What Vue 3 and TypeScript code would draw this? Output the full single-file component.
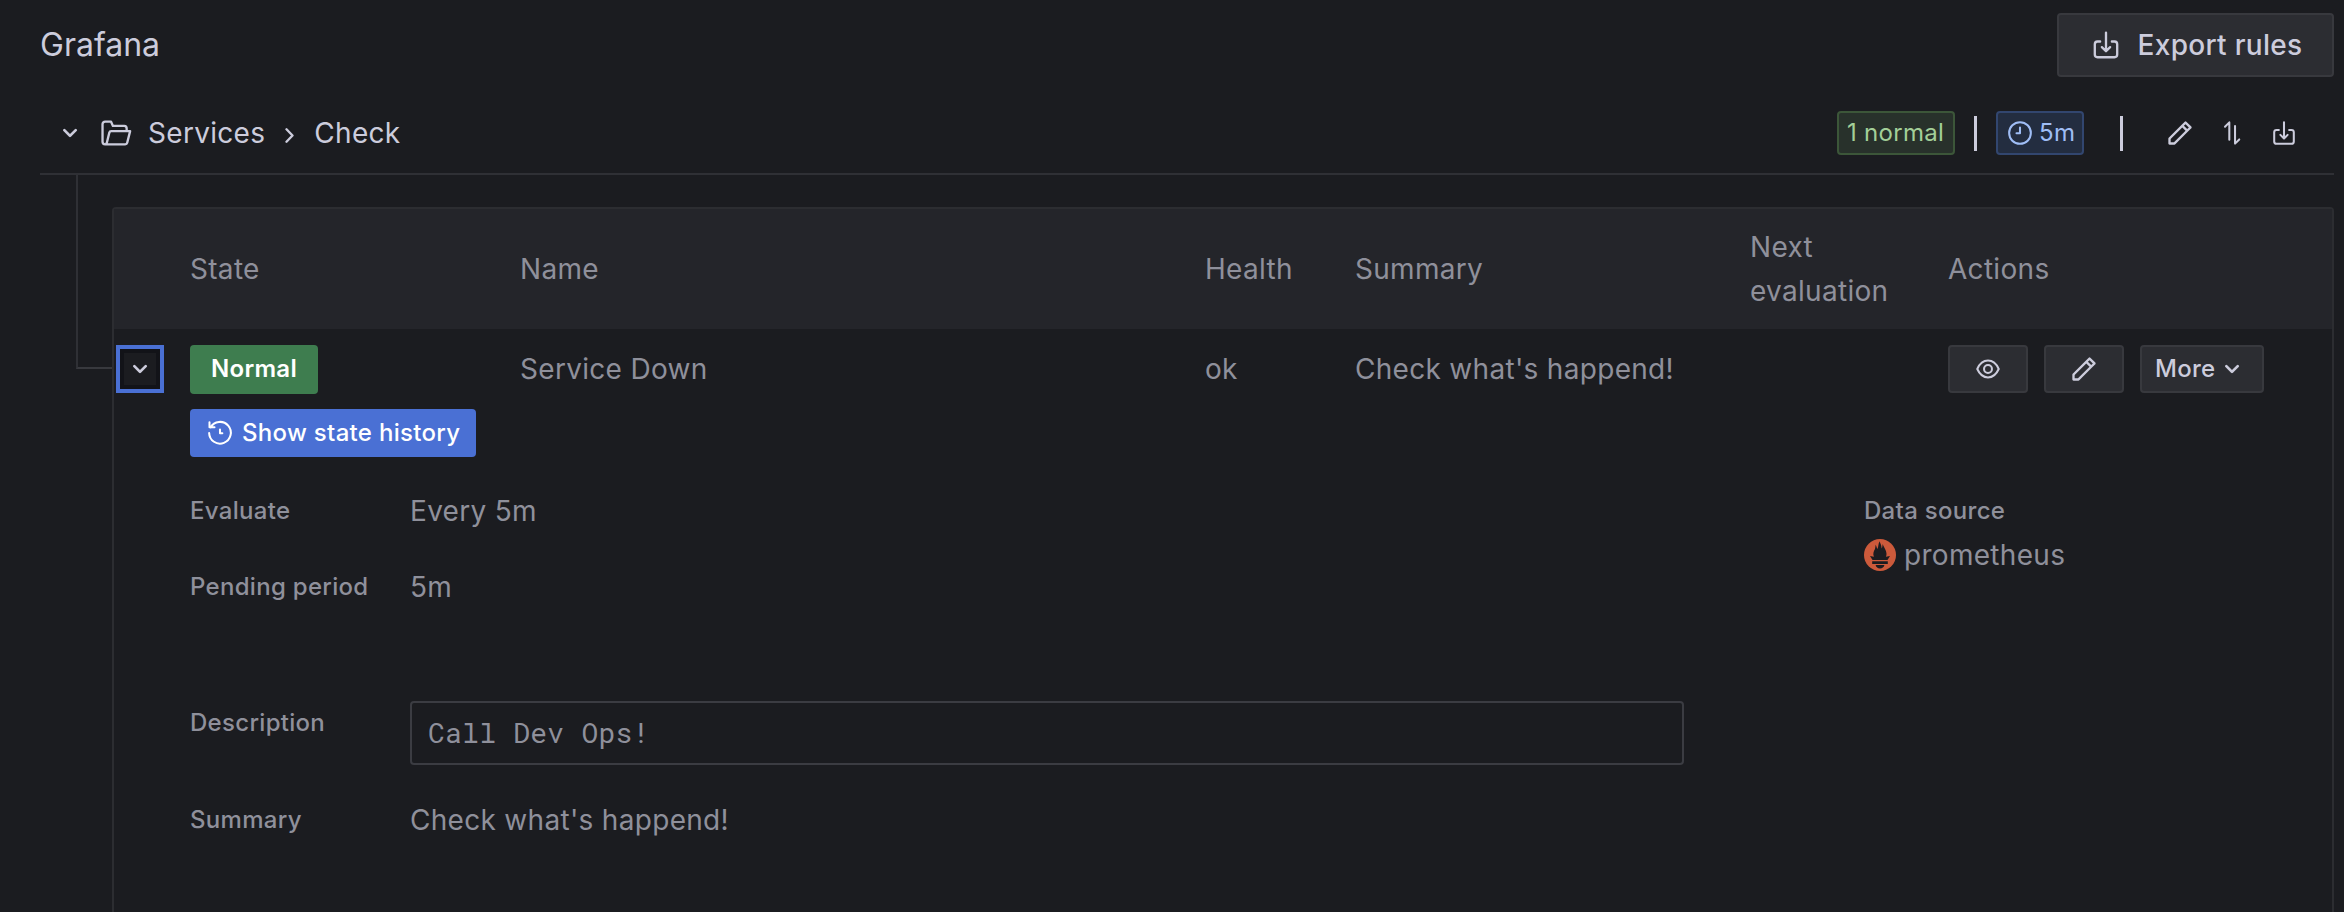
<script setup lang="ts">
interface Detail { label: string; value: string }
const headers: string[] = ['', 'State', 'Name', 'Health', 'Summary', 'Next evaluation', 'Actions']
const timing: Detail[] = [
  { label: 'Evaluate', value: 'Every 5m' },
  { label: 'Pending period', value: '5m' },
]
const chevron = 'M17 9.17a1 1 0 0 0-1.41 0L12 12.71 8.46 9.17a1 1 0 0 0-1.41 0 1 1 0 0 0 0 1.42l4.24 4.24a1 1 0 0 0 1.42 0L17 10.59a1 1 0 0 0 0-1.42Z'
const pen = 'M22 7.24a1 1 0 0 0-.29-.71l-4.24-4.24a1 1 0 0 0-.71-.29 1 1 0 0 0-.71.29l-2.83 2.83L2.29 16.05a1 1 0 0 0-.29.71V21a1 1 0 0 0 1 1h4.24a1 1 0 0 0 .76-.29l10.87-10.93L21.71 8a1.19 1.19 0 0 0 .22-.33 1 1 0 0 0 0-.24.7.7 0 0 0 0-.14ZM6.83 20H4v-2.83l9.93-9.93 2.83 2.83ZM18.17 8.66l-2.83-2.83 1.42-1.41 2.82 2.82Z'
const importIcon = 'M12 2.700V16.500M8.900 13.600 12 16.700 15.100 13.600M7.600 9.400H5.600A2 2 0 0 0 3.600 11.400V19.200A2 2 0 0 0 5.600 21.200H18.400A2 2 0 0 0 20.400 19.200V11.400A2 2 0 0 0 18.400 9.400H16.400'
</script>

<template>
  <main class="page">
    <header class="source">
      <h1>Grafana</h1>
      <button class="btn export">
        <svg class="i32 line" viewBox="0 0 24 24" fill="none"><path :d="importIcon" /></svg>
        <span>Export rules</span>
      </button>
    </header>

    <section class="group">
      <svg class="i32 toggle" viewBox="0 0 24 24"><path :d="chevron" /></svg>
      <svg class="i32 folder line" viewBox="0 0 24 24" fill="none">
        <path d="M3.800 20.500A1.900 1.900 0 0 1 1.900 18.600V5.400A1.900 1.900 0 0 1 3.800 3.500H8.300L9.700 6.700H18.200A1.900 1.900 0 0 1 20 8.600V10.200M3.800 20.500H18.900A1.600 1.600 0 0 0 20.400 19.300L22.600 10.600H8.400A1.500 1.500 0 0 0 7 11.700L5.100 19.500A1.500 1.500 0 0 1 3.800 20.500" />
      </svg>
      <span class="folder-name">Services</span>
      <svg class="crumb" viewBox="0 0 8 14" fill="none"><path d="M1.200 1.200 6.800 7 1.200 12.800" stroke="currentColor" stroke-width="2.200" stroke-linecap="round" stroke-linejoin="round" /></svg>
      <span class="group-name">Check</span>
      <div class="stats">
        <span class="badge ok">1 normal</span>
        <i class="bar first"></i>
        <span class="badge time">
          <svg class="i28 line" viewBox="0 0 24 24" fill="none"><circle cx="12" cy="12" r="9.300" /><path d="M12 7.200V12.200H9" /></svg>
          <span>5m</span>
        </span>
        <i class="bar second"></i>
        <div class="tools">
          <svg class="i28" viewBox="0 0 24 24"><path :d="pen" /></svg>
          <svg class="i28 line" viewBox="0 0 24 24" fill="none"><path d="M9.700 17.700V2.900L6 6.600M14.600 6V21.100L18.200 17.500" /></svg>
          <svg class="i28 line" viewBox="0 0 24 24" fill="none"><path :d="importIcon" /></svg>
        </div>
      </div>
    </section>

    <section class="tree">
      <div class="guide"></div>
      <div class="table">
        <div class="row head">
          <div v-for="h in headers" :key="h">{{ h }}</div>
        </div>
        <div class="row body">
          <div class="expander"><svg class="i32" viewBox="0 0 24 24"><path :d="chevron" /></svg></div>
          <div><span class="state">Normal</span></div>
          <div>Service Down</div>
          <div>ok</div>
          <div>Check what's happend!</div>
          <div></div>
          <div class="actions">
            <button class="btn small">
              <svg class="i28 line" viewBox="0 0 24 24" fill="none"><path d="M2.800 12C4.900 7.300 8 4.800 12 4.800S19.100 7.300 21.200 12C19.100 16.700 16 19.200 12 19.200S4.900 16.700 2.800 12Z" /><circle cx="12" cy="12" r="3.400" /></svg>
            </button>
            <button class="btn small"><svg class="i28" viewBox="0 0 24 24"><path :d="pen" /></svg></button>
            <button class="btn more"><span>More</span><svg class="i32" viewBox="0 0 24 24"><path :d="chevron" /></svg></button>
          </div>
        </div>

        <div class="details">
          <button class="history">
            <svg class="i28 line" viewBox="0 0 24 24" fill="none"><path d="M3 2.700V7H7.300M3.900 7.200A9.300 9.300 0 1 1 2.700 12" /><path d="M12 9V12.200H14" /></svg>
            <span>Show state history</span>
          </button>
          <div class="split">
            <dl class="left">
              <div v-for="d in timing" :key="d.label" class="field"><dt>{{ d.label }}</dt><dd>{{ d.value }}</dd></div>
            </dl>
            <div class="right">
              <div class="label">Data source</div>
              <div class="ds">
                <svg class="i32" viewBox="0 0 32 32">
                  <circle cx="16" cy="16" r="16" fill="#cc5a3b" />
                  <path fill="#1b1c20" d="M8.200 22.300h15.600v2.600H8.200zM11.600 26h8.800c-.4 2.200-2.200 3.500-4.400 3.500s-4-1.300-4.400-3.500zM8.500 20.900 6 17 9.900 17.800C8.700 15.100 9.600 12.400 11 10 11.400 8.500 11.400 7.200 11.600 5.700 12.700 7.300 12.600 8.600 13.400 9.900 14.700 7.600 14 4.700 15.700 2.200 16.300 4.700 17.600 5.700 17.600 9.500 18.600 8.200 18.200 6.500 18.800 4.900 19.500 7.900 22.600 11.200 22.500 15Q22.500 16.400 21.900 17.800L26 17 23.500 20.900Z" />
                </svg>
                <span>prometheus</span>
              </div>
            </div>
          </div>
          <dl class="notes">
            <div class="field description"><dt>Description</dt><dd class="code">Call Dev Ops!</dd></div>
            <div class="field"><dt>Summary</dt><dd>Check what's happend!</dd></div>
          </dl>
        </div>
      </div>
    </section>
  </main>
</template>

<style>
html, body { background: #1b1c20; overflow: hidden; }
</style>
<style scoped>
* { box-sizing: border-box; }
.page { height: 912px; overflow: hidden; display: flex; flex-direction: column; padding: 0 10px 0 40px; background: #1b1c20; color: #ccccdc; font-family: Inter, sans-serif; font-size: 28px; line-height: 44px; letter-spacing: .3px; }
svg { display: block; flex: none; fill: currentColor; }
svg[fill="none"] { fill: none; }
.line { stroke: currentColor; stroke-width: 1.75; stroke-linecap: round; stroke-linejoin: round; }
button { font: inherit; letter-spacing: inherit; color: inherit; margin: 0; }
dl, dd, h1 { margin: 0; }
.i28 { width: 28px; height: 28px; }
.i32 { width: 32px; height: 32px; }
.source { height: 90px; flex: none; display: flex; align-items: center; justify-content: space-between; }
h1 { font-size: 32px; font-weight: 400; letter-spacing: 0; }
.btn { display: flex; align-items: center; justify-content: center; background: #2c2d32; border: 2px solid #38393e; border-radius: 4px; padding: 0; font-weight: 500; }
.export { width: 277px; height: 64px; gap: 16px; padding-left: 1px; }
.group { height: 85px; flex: none; display: flex; align-items: center; padding-top: 3px; border-bottom: 2px solid #2f3035; }
.toggle { margin-left: 14px; }
.folder { margin-left: 14px; }
.folder-name { margin-left: 16px; }
.crumb { width: 9px; height: 15px; margin: 4px 20px 0; }
.stats { margin-left: auto; margin-right: 36px; display: flex; align-items: center; }
.badge { display: flex; align-items: center; height: 44px; border: 2px solid; border-radius: 4px; font-size: 24px; }
.ok { width: 118px; padding-left: 8px; color: #a3cf98; background: #28312b; border-color: #3c5639; }
.time { width: 88px; padding-left: 8px; gap: 5px; color: #9fbdf5; background: #232d40; border-color: #32466f; }
.bar { width: 3px; height: 35px; background: #ccccdc; }
.first { margin: 0 19px; }
.second { margin: 0 43px 0 36px; }
.tools { display: flex; gap: 24px; }
.tree { flex: 1; display: flex; }
.guide { width: 36px; height: 194px; margin-left: 36px; border-left: 2px solid #2f3035; border-bottom: 2px solid #38393e; }
.table { flex: 1; margin-top: 32px; border: 2px solid #2c2d31; border-bottom: 0; border-radius: 4px 4px 0 0; color: #8f909b; }
.row { display: grid; grid-template-columns: 76px 330px 685px 150px 395px 198px 1fr; align-items: center; }
.head { height: 120px; background: #24252a; }
.head div:nth-child(6) { width: 150px; }
.body { height: 80px; }
.expander { width: 48px; height: 48px; margin-left: 2px; display: grid; place-items: center; color: #ccccdc; border: 4px solid #4a70d4; box-shadow: inset 0 0 0 4px #121318; }
.state { display: grid; place-items: center; width: 128px; height: 49px; border-radius: 4px; background: #3e7d4f; color: #fff; font-size: 24px; font-weight: 600; }
.actions { display: flex; gap: 16px; color: #ccccdc; }
.small { width: 80px; height: 48px; }
.more { width: 124px; height: 48px; justify-content: flex-start; padding-left: 13px; font-size: 24px; }
.details { padding-left: 76px; }
.history { display: flex; align-items: center; width: 286px; height: 48px; padding: 0 0 0 16px; gap: 8px; background: #4a70d4; border: 0; border-radius: 4px; color: #fff; font-size: 24px; font-weight: 500; }
.split { display: flex; height: 244px; padding-top: 32px; }
.left { width: 1674px; }
.field { display: flex; height: 76px; }
dt, .label { width: 220px; font-size: 24px; font-weight: 500; flex: none; }
.ds { display: flex; align-items: center; gap: 8px; }
.description { height: 97px; }
.code { width: 1274px; height: 64px; padding: 8px 16px; border: 2px solid #3b3c42; border-radius: 4px; font-family: "Roboto Mono", "DejaVu Sans Mono", monospace; letter-spacing: .25px; }
</style>
